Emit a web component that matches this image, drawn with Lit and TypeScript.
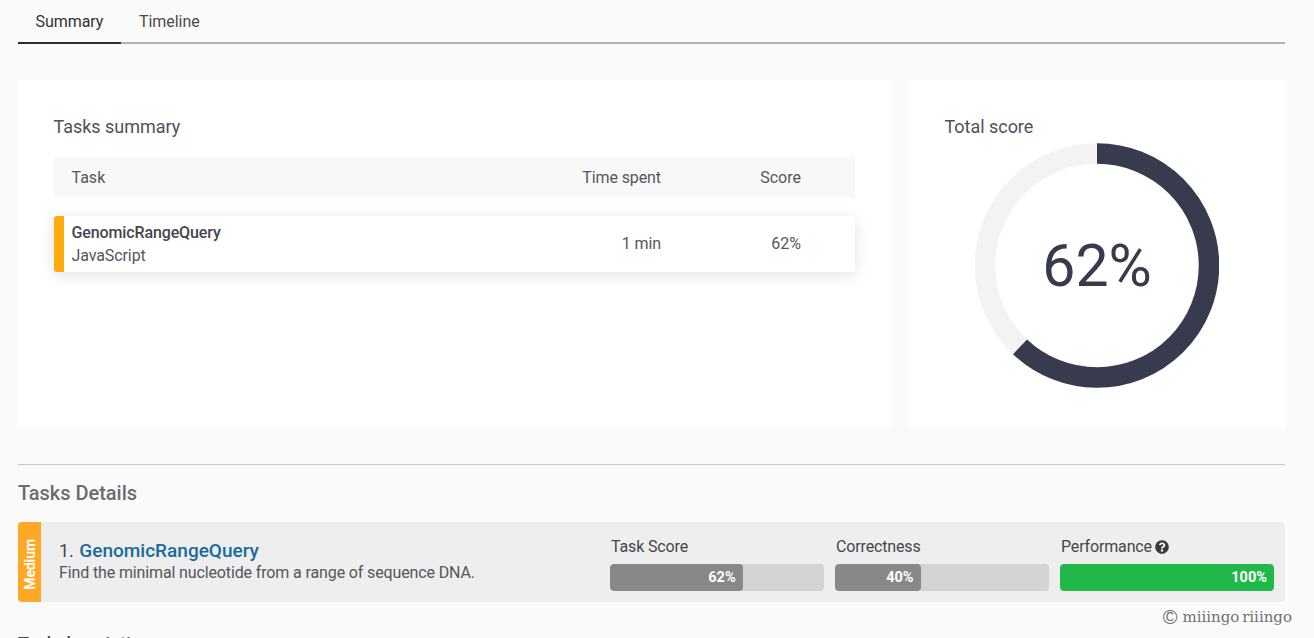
import { LitElement, html, css } from "lit";
import { customElement } from "lit/decorators.js";

const R = 112;
const C = 2 * Math.PI * R;

@customElement("app-root")
export class AppRoot extends LitElement {
  static styles = css`
    :host {
      display: block;
      position: relative;
      width: 1314px;
      height: 638px;
      overflow: hidden;
      background: #fafafa;
      font-family: Roboto, "Liberation Sans", sans-serif;
      color: #4a4b52;
      box-sizing: border-box;
      padding: 0 29px 0 18px;
    }
    * { box-sizing: border-box; }
    .tabs {
      display: flex;
      height: 44px;
      border-bottom: 2px solid #b3b3b3;
    }
    .tab {
      padding: 12px 18px 0;
      height: 44px;
      font-size: 16px;
      line-height: 19px;
      letter-spacing: -0.05px;
      color: #4a4a4a;
    }
    .tab.active {
      width: 103px;
      padding-left: 17.5px;
      color: #333;
      border-bottom: 2px solid #2b2b30;
    }
    .cards {
      display: flex;
      gap: 18px;
      margin-top: 36px;
      height: 348px;
    }
    .card {
      background: #fff;
      padding: 36px;
    }
    .card.left { width: 873px; }
    .card.right { width: 376px; }
    h3 {
      margin: 0 0 0 -0.5px;
      font-weight: 400;
      font-size: 18px;
      line-height: 21px;
      letter-spacing: -0.03px;
      color: #4f5058;
    }
    .grid {
      display: grid;
      grid-template-columns: 1fr 120px 194px;
      align-items: center;
      font-size: 16px;
      color: #55565c;
    }
    .head {
      margin-top: 20px;
      height: 40px;
      background: #f8f8f9;
      padding-left: 17.5px;
      border-radius: 2px;
    }
    .row {
      margin-top: 19px;
      height: 56px;
      background: #fff;
      border-left: 10px solid #ffab0f;
      border-radius: 3px 0 0 3px;
      padding-left: 7.5px;
      box-shadow: 0 3px 16px rgba(0, 0, 0, 0.12);
    }
    .num { text-align: right; letter-spacing: -0.1px; }
    .row .num, .row .scorecol { padding-bottom: 2px; }
    .scorecol { text-align: right; padding-right: 54px; }
    .name {
      font-weight: 500;
      line-height: 23px;
      letter-spacing: -0.12px;
      color: #45464d;
    }
    .lang { line-height: 23px; letter-spacing: -0.1px; color: #55565c; }
    .ring {
      position: relative;
      height: 245px;
      width: 244px;
      margin-left: 30px;
      margin-top: 6px;
    }
    .ring svg { display: block; }
    .ring-label {
      position: absolute;
      inset: 0;
      display: flex;
      align-items: center;
      justify-content: center;
      font-size: 59px;
      font-weight: 400;
      color: #383b4d;
    }
    hr {
      margin: 36px 0 0;
      border: 0;
      height: 1px;
      background: #c8c8c8;
    }
    h2 {
      margin: 17px 0 0;
      font-size: 20px;
      line-height: 23px;
      font-weight: 500;
      letter-spacing: -0.03px;
      color: #6b6b70;
    }
    .task {
      display: flex;
      margin-top: 17px;
      height: 80px;
      background: #eeeeee;
      border-radius: 4px;
      overflow: hidden;
    }
    .badge {
      width: 23px;
      background: #ffa726;
      color: #fff;
      font-weight: 700;
      font-size: 14px;
      display: flex;
      align-items: center;
      justify-content: center;
    }
    .badge span {
      writing-mode: vertical-rl;
      transform: rotate(180deg);
      margin-top: 5px;
      letter-spacing: -0.1px;
    }
    .info {
      width: 569px;
      padding: 18px 0 0 18px;
    }
    .title { font-size: 18px; line-height: 22px; color: #45464d; }
    .title a { color: #196b9b; font-size: 19px; font-weight: 500; text-decoration: none; margin-left: 1px; }
    .desc { font-size: 16px; line-height: 22px; letter-spacing: -0.13px; color: #55565c; }
    .metrics {
      display: flex;
      gap: 11px;
      padding-top: 15px;
    }
    .metric { width: 214px; }
    .label {
      display: flex;
      align-items: center;
      gap: 3px;
      font-size: 16px;
      line-height: 19px;
      letter-spacing: -0.15px;
      padding-left: 1px;
      color: #45464d;
    }
    .label svg { width: 14px; height: 14px; fill: #3a3a3a; }
    .bar {
      margin-top: 8px;
      height: 27px;
      border-radius: 4px;
      background: #d3d3d3;
      overflow: hidden;
    }
    .fill {
      height: 27px;
      border-radius: 4px;
      background: #888888;
      color: #fff;
      font-size: 14.5px;
      font-weight: 700;
      line-height: 27px;
      text-align: right;
      padding-right: 7px;
    }
    .fill.ok { background: #20b848; }
    .next {
      margin: 31px 0 0;
      font-size: 18px;
      line-height: 21px;
      font-weight: 500;
      color: #4a4b52;
    }
    .mark {
      position: absolute;
      right: 22px;
      top: 608px;
      height: 18px;
      display: flex;
      align-items: center;
      gap: 5px;
      font-family: "DejaVu Serif", serif;
      font-size: 15px;
      line-height: 18px;
      word-spacing: -2px;
      color: #6f7074;
      white-space: nowrap;
    }
    .mark .c {
      font-family: "Liberation Sans", sans-serif;
      font-size: 20px;
      line-height: 18px;
      font-weight: 400;
    }
  `;

  private metric(label: string, pct: number, help = false) {
    return html`<div class="metric">
      <div class="label">
        ${label}
        ${help
          ? html`<svg viewBox="0 0 512 512"><path d="M504 256c0 136.997-111.043 248-248 248S8 392.997 8 256C8 119.083 119.043 8 256 8s248 111.083 248 248zM262.655 90c-54.497 0-89.255 22.957-116.549 63.758-3.536 5.286-2.353 12.415 2.715 16.258l34.699 26.31c5.205 3.947 12.621 3.008 16.665-2.122 17.864-22.658 30.113-35.797 57.303-35.797 20.429 0 45.698 13.148 45.698 32.958 0 14.976-12.363 22.667-32.534 33.976C247.128 238.528 216 254.941 216 296v4c0 6.627 5.373 12 12 12h56c6.627 0 12-5.373 12-12v-1.333c0-28.462 83.186-29.647 83.186-106.667 0-58.002-60.165-102-116.531-102zM256 338c-25.365 0-46 20.635-46 46 0 25.364 20.635 46 46 46s46-20.636 46-46c0-25.365-20.635-46-46-46z"/></svg>`
          : ""}
      </div>
      <div class="bar">
        <div class="fill ${pct === 100 ? "ok" : ""}" style="width:${pct}%">${pct}%</div>
      </div>
    </div>`;
  }

  render() {
    return html`
      <div class="tabs">
        <div class="tab active">Summary</div>
        <div class="tab">Timeline</div>
      </div>
      <div class="cards">
        <div class="card left">
          <h3>Tasks summary</h3>
          <div class="grid head">
            <div>Task</div>
            <div class="num">Time spent</div>
            <div class="scorecol">Score</div>
          </div>
          <div class="grid row">
            <div>
              <div class="name">GenomicRangeQuery</div>
              <div class="lang">JavaScript</div>
            </div>
            <div class="num">1 min</div>
            <div class="scorecol">62%</div>
          </div>
        </div>
        <div class="card right">
          <h3>Total score</h3>
          <div class="ring">
            <svg width="244" height="245" viewBox="0 0 244 245">
              <circle cx="122" cy="122.5" r="${R}" fill="none" stroke="#f3f3f3" stroke-width="20.5"></circle>
              <circle
                cx="122"
                cy="122.5"
                r="${R}"
                fill="none"
                stroke="#383b4d"
                stroke-width="20.5"
                stroke-dasharray="${C * 0.62} ${C}"
                transform="rotate(-90 122 122.5)"
              ></circle>
            </svg>
            <div class="ring-label">62%</div>
          </div>
        </div>
      </div>
      <hr />
      <h2>Tasks Details</h2>
      <div class="task">
        <div class="badge"><span>Medium</span></div>
        <div class="info">
          <div class="title">1. <a>GenomicRangeQuery</a></div>
          <div class="desc">Find the minimal nucleotide from a range of sequence DNA.</div>
        </div>
        <div class="metrics">
          ${this.metric("Task Score", 62)} ${this.metric("Correctness", 40)}
          ${this.metric("Performance", 100, true)}
        </div>
      </div>
      <div class="next">Task description</div>
      <div class="mark"><span class="c">©</span><span>miiingo riiingo</span></div>
    `;
  }
}
